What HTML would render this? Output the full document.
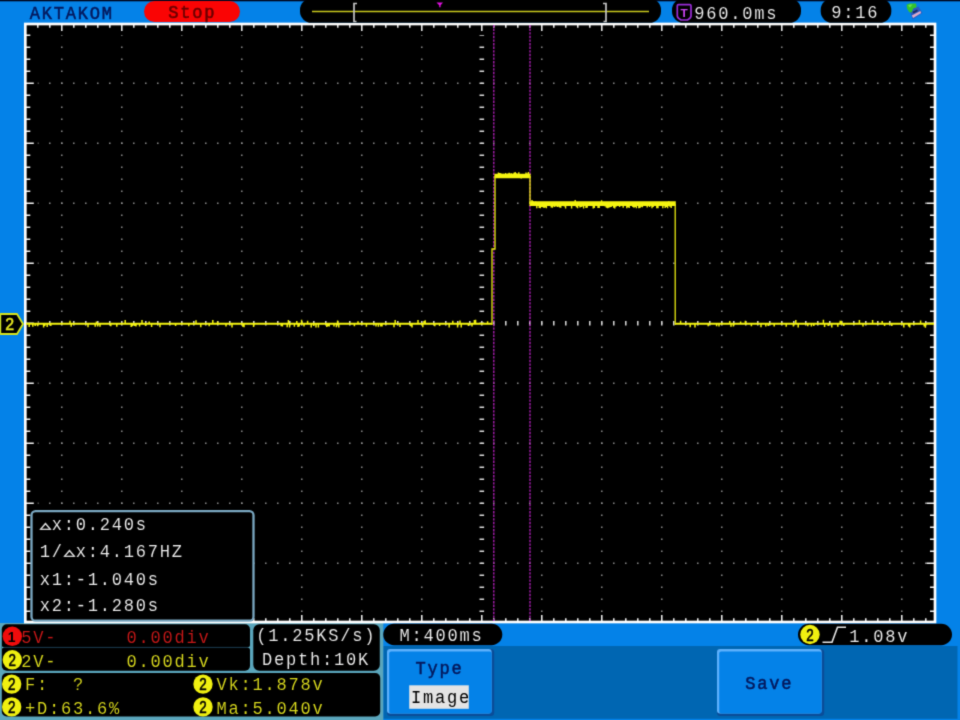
<!DOCTYPE html>
<html lang="en"><head><meta charset="utf-8"><title>AKTAKOM oscilloscope</title>
<style>
html,body{margin:0;padding:0;background:#0482e8;overflow:hidden}
body{width:960px;height:720px;position:relative}
svg{position:absolute;left:0;top:0;display:block}
text{font-family:"Liberation Mono","DejaVu Sans Mono",monospace;font-size:18.0px;letter-spacing:1.832px;white-space:pre;stroke-width:0.1px;stroke:#000}
.w{fill:#eeeeee}.y{fill:#dada1e}.r{fill:#c81818}.n{fill:#04185c;stroke:#04185c;stroke-width:0.5px}.s{fill:#6a0000;stroke:#6a0000;stroke-width:0.55px}.k{fill:#000;stroke:none}
.num{font-family:"Liberation Sans",sans-serif;font-size:16.8px;letter-spacing:0;fill:#000;stroke:#000;stroke-width:0.55px}
.tri{font-family:"DejaVu Sans Mono",monospace;letter-spacing:0}
</style></head><body>
<svg width="960" height="720" viewBox="0 0 960 720">
<defs><filter id="soft" x="-10" y="-10" width="980" height="740" filterUnits="userSpaceOnUse" color-interpolation-filters="sRGB"><feConvolveMatrix order="3" kernelMatrix="0.04 0.2 0.04 0.2 1 0.2 0.04 0.2 0.04" divisor="1.96" edgeMode="duplicate" preserveAlpha="true"/></filter></defs>
<g filter="url(#soft)">
<rect x="-10" y="-10" width="980" height="740" fill="#0482e8"/>
<rect x="-10" y="-10" width="980" height="11.3" fill="#000820"/>
<rect x="383.3" y="646" width="574.2" height="72.8" fill="#0066b2"/>
<rect x="-10" y="623" width="393.3" height="110" fill="#5aa6bc"/>
<rect x="25.3" y="24" width="909.7" height="598" fill="#000"/>
<g stroke="#989898" stroke-width="1.4" fill="none"><line x1="61.8" y1="35.3" x2="61.8" y2="615" stroke-dasharray="1.4 10.6" stroke-dashoffset="0.7"/><line x1="121.8" y1="35.3" x2="121.8" y2="615" stroke-dasharray="1.4 10.6" stroke-dashoffset="0.7"/><line x1="181.8" y1="35.3" x2="181.8" y2="615" stroke-dasharray="1.4 10.6" stroke-dashoffset="0.7"/><line x1="241.8" y1="35.3" x2="241.8" y2="615" stroke-dasharray="1.4 10.6" stroke-dashoffset="0.7"/><line x1="301.8" y1="35.3" x2="301.8" y2="615" stroke-dasharray="1.4 10.6" stroke-dashoffset="0.7"/><line x1="361.8" y1="35.3" x2="361.8" y2="615" stroke-dasharray="1.4 10.6" stroke-dashoffset="0.7"/><line x1="421.8" y1="35.3" x2="421.8" y2="615" stroke-dasharray="1.4 10.6" stroke-dashoffset="0.7"/><line x1="541.8" y1="35.3" x2="541.8" y2="615" stroke-dasharray="1.4 10.6" stroke-dashoffset="0.7"/><line x1="601.8" y1="35.3" x2="601.8" y2="615" stroke-dasharray="1.4 10.6" stroke-dashoffset="0.7"/><line x1="661.8" y1="35.3" x2="661.8" y2="615" stroke-dasharray="1.4 10.6" stroke-dashoffset="0.7"/><line x1="721.8" y1="35.3" x2="721.8" y2="615" stroke-dasharray="1.4 10.6" stroke-dashoffset="0.7"/><line x1="781.8" y1="35.3" x2="781.8" y2="615" stroke-dasharray="1.4 10.6" stroke-dashoffset="0.7"/><line x1="841.8" y1="35.3" x2="841.8" y2="615" stroke-dasharray="1.4 10.6" stroke-dashoffset="0.7"/><line x1="901.8" y1="35.3" x2="901.8" y2="615" stroke-dasharray="1.4 10.6" stroke-dashoffset="0.7"/><line x1="37.8" y1="83.3" x2="930" y2="83.3" stroke-dasharray="1.4 10.6" stroke-dashoffset="0.7"/><line x1="37.8" y1="143.3" x2="930" y2="143.3" stroke-dasharray="1.4 10.6" stroke-dashoffset="0.7"/><line x1="37.8" y1="203.3" x2="930" y2="203.3" stroke-dasharray="1.4 10.6" stroke-dashoffset="0.7"/><line x1="37.8" y1="263.3" x2="930" y2="263.3" stroke-dasharray="1.4 10.6" stroke-dashoffset="0.7"/><line x1="37.8" y1="383.3" x2="930" y2="383.3" stroke-dasharray="1.4 10.6" stroke-dashoffset="0.7"/><line x1="37.8" y1="443.3" x2="930" y2="443.3" stroke-dasharray="1.4 10.6" stroke-dashoffset="0.7"/><line x1="37.8" y1="503.3" x2="930" y2="503.3" stroke-dasharray="1.4 10.6" stroke-dashoffset="0.7"/><line x1="37.8" y1="563.3" x2="930" y2="563.3" stroke-dasharray="1.4 10.6" stroke-dashoffset="0.7"/></g>
<g stroke="#dcdcdc" fill="none">
<line x1="481.8" y1="35.3" x2="481.8" y2="615" stroke-width="4.6" stroke-dasharray="1.5 10.5" stroke-dashoffset="0.75"/>
<line x1="37.8" y1="323.3" x2="930" y2="323.3" stroke-width="4.6" stroke-dasharray="1.5 10.5" stroke-dashoffset="0.75"/>
</g>
<path d="M37.8 24 v3.7 M37.8 622 v-3.7 M49.8 24 v3.7 M49.8 622 v-3.7 M61.8 24 v7 M61.8 622 v-7 M73.8 24 v3.7 M73.8 622 v-3.7 M85.8 24 v3.7 M85.8 622 v-3.7 M97.8 24 v3.7 M97.8 622 v-3.7 M109.8 24 v3.7 M109.8 622 v-3.7 M121.8 24 v7 M121.8 622 v-7 M133.8 24 v3.7 M133.8 622 v-3.7 M145.8 24 v3.7 M145.8 622 v-3.7 M157.8 24 v3.7 M157.8 622 v-3.7 M169.8 24 v3.7 M169.8 622 v-3.7 M181.8 24 v7 M181.8 622 v-7 M193.8 24 v3.7 M193.8 622 v-3.7 M205.8 24 v3.7 M205.8 622 v-3.7 M217.8 24 v3.7 M217.8 622 v-3.7 M229.8 24 v3.7 M229.8 622 v-3.7 M241.8 24 v7 M241.8 622 v-7 M253.8 24 v3.7 M253.8 622 v-3.7 M265.8 24 v3.7 M265.8 622 v-3.7 M277.8 24 v3.7 M277.8 622 v-3.7 M289.8 24 v3.7 M289.8 622 v-3.7 M301.8 24 v7 M301.8 622 v-7 M313.8 24 v3.7 M313.8 622 v-3.7 M325.8 24 v3.7 M325.8 622 v-3.7 M337.8 24 v3.7 M337.8 622 v-3.7 M349.8 24 v3.7 M349.8 622 v-3.7 M361.8 24 v7 M361.8 622 v-7 M373.8 24 v3.7 M373.8 622 v-3.7 M385.8 24 v3.7 M385.8 622 v-3.7 M397.8 24 v3.7 M397.8 622 v-3.7 M409.8 24 v3.7 M409.8 622 v-3.7 M421.8 24 v7 M421.8 622 v-7 M433.8 24 v3.7 M433.8 622 v-3.7 M445.8 24 v3.7 M445.8 622 v-3.7 M457.8 24 v3.7 M457.8 622 v-3.7 M469.8 24 v3.7 M469.8 622 v-3.7 M481.8 24 v7 M481.8 622 v-7 M493.8 24 v3.7 M493.8 622 v-3.7 M505.8 24 v3.7 M505.8 622 v-3.7 M517.8 24 v3.7 M517.8 622 v-3.7 M529.8 24 v3.7 M529.8 622 v-3.7 M541.8 24 v7 M541.8 622 v-7 M553.8 24 v3.7 M553.8 622 v-3.7 M565.8 24 v3.7 M565.8 622 v-3.7 M577.8 24 v3.7 M577.8 622 v-3.7 M589.8 24 v3.7 M589.8 622 v-3.7 M601.8 24 v7 M601.8 622 v-7 M613.8 24 v3.7 M613.8 622 v-3.7 M625.8 24 v3.7 M625.8 622 v-3.7 M637.8 24 v3.7 M637.8 622 v-3.7 M649.8 24 v3.7 M649.8 622 v-3.7 M661.8 24 v7 M661.8 622 v-7 M673.8 24 v3.7 M673.8 622 v-3.7 M685.8 24 v3.7 M685.8 622 v-3.7 M697.8 24 v3.7 M697.8 622 v-3.7 M709.8 24 v3.7 M709.8 622 v-3.7 M721.8 24 v7 M721.8 622 v-7 M733.8 24 v3.7 M733.8 622 v-3.7 M745.8 24 v3.7 M745.8 622 v-3.7 M757.8 24 v3.7 M757.8 622 v-3.7 M769.8 24 v3.7 M769.8 622 v-3.7 M781.8 24 v7 M781.8 622 v-7 M793.8 24 v3.7 M793.8 622 v-3.7 M805.8 24 v3.7 M805.8 622 v-3.7 M817.8 24 v3.7 M817.8 622 v-3.7 M829.8 24 v3.7 M829.8 622 v-3.7 M841.8 24 v7 M841.8 622 v-7 M853.8 24 v3.7 M853.8 622 v-3.7 M865.8 24 v3.7 M865.8 622 v-3.7 M877.8 24 v3.7 M877.8 622 v-3.7 M889.8 24 v3.7 M889.8 622 v-3.7 M901.8 24 v7 M901.8 622 v-7 M913.8 24 v3.7 M913.8 622 v-3.7 M925.8 24 v3.7 M925.8 622 v-3.7 M25.3 35.3 h5 M935 35.3 h-5 M25.3 47.3 h5 M935 47.3 h-5 M25.3 59.3 h5 M935 59.3 h-5 M25.3 71.3 h5 M935 71.3 h-5 M25.3 83.3 h8.5 M935 83.3 h-8.5 M25.3 95.3 h5 M935 95.3 h-5 M25.3 107.3 h5 M935 107.3 h-5 M25.3 119.3 h5 M935 119.3 h-5 M25.3 131.3 h5 M935 131.3 h-5 M25.3 143.3 h8.5 M935 143.3 h-8.5 M25.3 155.3 h5 M935 155.3 h-5 M25.3 167.3 h5 M935 167.3 h-5 M25.3 179.3 h5 M935 179.3 h-5 M25.3 191.3 h5 M935 191.3 h-5 M25.3 203.3 h8.5 M935 203.3 h-8.5 M25.3 215.3 h5 M935 215.3 h-5 M25.3 227.3 h5 M935 227.3 h-5 M25.3 239.3 h5 M935 239.3 h-5 M25.3 251.3 h5 M935 251.3 h-5 M25.3 263.3 h8.5 M935 263.3 h-8.5 M25.3 275.3 h5 M935 275.3 h-5 M25.3 287.3 h5 M935 287.3 h-5 M25.3 299.3 h5 M935 299.3 h-5 M25.3 311.3 h5 M935 311.3 h-5 M25.3 323.3 h8.5 M935 323.3 h-8.5 M25.3 335.3 h5 M935 335.3 h-5 M25.3 347.3 h5 M935 347.3 h-5 M25.3 359.3 h5 M935 359.3 h-5 M25.3 371.3 h5 M935 371.3 h-5 M25.3 383.3 h8.5 M935 383.3 h-8.5 M25.3 395.3 h5 M935 395.3 h-5 M25.3 407.3 h5 M935 407.3 h-5 M25.3 419.3 h5 M935 419.3 h-5 M25.3 431.3 h5 M935 431.3 h-5 M25.3 443.3 h8.5 M935 443.3 h-8.5 M25.3 455.3 h5 M935 455.3 h-5 M25.3 467.3 h5 M935 467.3 h-5 M25.3 479.3 h5 M935 479.3 h-5 M25.3 491.3 h5 M935 491.3 h-5 M25.3 503.3 h8.5 M935 503.3 h-8.5 M25.3 515.3 h5 M935 515.3 h-5 M25.3 527.3 h5 M935 527.3 h-5 M25.3 539.3 h5 M935 539.3 h-5 M25.3 551.3 h5 M935 551.3 h-5 M25.3 563.3 h8.5 M935 563.3 h-8.5 M25.3 575.3 h5 M935 575.3 h-5 M25.3 587.3 h5 M935 587.3 h-5 M25.3 599.3 h5 M935 599.3 h-5 M25.3 611.3 h5 M935 611.3 h-5" stroke="#f4f4f4" stroke-width="1.5" fill="none"/>
<rect x="25.3" y="24" width="909.7" height="598" fill="none" stroke="#fff" stroke-width="2.7"/>
<g stroke="#ac1eb4" stroke-width="1.35" stroke-dasharray="2.4 1.2" fill="none">
<line x1="493.8" y1="25" x2="493.8" y2="621"/><line x1="530" y1="25" x2="530" y2="621"/></g>
<path d="M26 323.7 H492 M675 323.7 H934" stroke="#f4f410" stroke-width="1.9" fill="none"/>
<path d="M29.2 323.7 v3.4 M32.8 323.7 v3.1 M35.2 323.7 v2.4 M37.6 323.7 v2.6 M43.6 323.7 v3.8 M44.8 323.7 v2.4 M47.2 323.7 v3.3 M50.8 323.7 v2.3 M70.0 323.7 v-3.0 M71.2 323.7 v3.1 M88.0 323.7 v3.5 M95.2 323.7 v3.1 M96.4 323.7 v-2.3 M97.6 323.7 v2.7 M100.0 323.7 v3.0 M110.8 323.7 v2.6 M116.8 323.7 v3.0 M125.2 323.7 v-3.8 M131.2 323.7 v3.4 M132.4 323.7 v2.6 M134.8 323.7 v2.2 M136.0 323.7 v2.9 M139.6 323.7 v2.7 M142.0 323.7 v-3.7 M145.6 323.7 v2.4 M149.2 323.7 v-2.3 M151.6 323.7 v3.2 M160.0 323.7 v3.6 M175.6 323.7 v2.3 M188.8 323.7 v2.6 M196.0 323.7 v-3.4 M200.8 323.7 v3.6 M209.2 323.7 v2.5 M212.8 323.7 v-3.7 M217.6 323.7 v-2.3 M226.0 323.7 v2.7 M232.0 323.7 v3.8 M242.8 323.7 v3.0 M244.0 323.7 v3.6 M253.6 323.7 v3.2 M281.2 323.7 v2.5 M282.4 323.7 v2.7 M287.2 323.7 v3.5 M288.4 323.7 v-3.8 M289.6 323.7 v3.9 M294.4 323.7 v3.0 M296.8 323.7 v-2.8 M298.0 323.7 v3.2 M299.2 323.7 v2.8 M301.6 323.7 v-4.0 M304.0 323.7 v2.7 M307.6 323.7 v-3.0 M311.2 323.7 v3.9 M313.6 323.7 v2.3 M316.0 323.7 v3.9 M318.4 323.7 v3.7 M326.8 323.7 v3.2 M328.0 323.7 v2.5 M329.2 323.7 v2.8 M334.0 323.7 v2.9 M336.4 323.7 v3.5 M337.6 323.7 v-3.1 M338.8 323.7 v3.7 M354.4 323.7 v2.5 M358.0 323.7 v-2.4 M366.4 323.7 v3.0 M376.0 323.7 v2.9 M378.4 323.7 v3.1 M380.8 323.7 v2.9 M382.0 323.7 v2.8 M394.0 323.7 v3.5 M395.2 323.7 v-3.7 M400.0 323.7 v3.2 M410.8 323.7 v2.5 M412.0 323.7 v3.7 M418.0 323.7 v-3.6 M422.8 323.7 v3.5 M424.0 323.7 v-2.7 M425.2 323.7 v-3.5 M434.8 323.7 v2.5 M439.6 323.7 v2.3 M449.2 323.7 v3.8 M452.8 323.7 v-3.0 M457.6 323.7 v3.9 M460.0 323.7 v-3.2 M461.2 323.7 v3.7 M468.4 323.7 v2.2 M472.0 323.7 v2.8 M474.4 323.7 v-3.6 M475.6 323.7 v-3.9 M487.6 323.7 v-2.4 M680.6 323.7 v-2.9 M690.2 323.7 v3.5 M695.0 323.7 v3.9 M708.2 323.7 v2.5 M716.6 323.7 v2.6 M719.0 323.7 v2.7 M729.8 323.7 v-2.7 M731.0 323.7 v3.1 M733.4 323.7 v2.7 M740.6 323.7 v-2.3 M745.4 323.7 v-2.9 M751.4 323.7 v2.5 M761.0 323.7 v3.6 M765.8 323.7 v2.7 M768.2 323.7 v2.4 M774.2 323.7 v2.8 M786.2 323.7 v3.1 M793.4 323.7 v2.8 M795.8 323.7 v-3.6 M798.2 323.7 v3.9 M807.8 323.7 v2.6 M811.4 323.7 v2.9 M813.8 323.7 v2.3 M823.4 323.7 v-3.9 M824.6 323.7 v3.4 M828.2 323.7 v2.2 M831.8 323.7 v3.9 M837.8 323.7 v3.1 M840.2 323.7 v-2.9 M841.4 323.7 v-3.0 M843.8 323.7 v2.3 M859.4 323.7 v-3.6 M863.0 323.7 v2.7 M872.6 323.7 v-3.7 M882.2 323.7 v-2.6 M884.6 323.7 v2.3 M891.8 323.7 v2.4 M903.8 323.7 v3.7 M908.6 323.7 v2.7 M909.8 323.7 v3.8 M920.6 323.7 v-3.1 M924.2 323.7 v2.8 M925.4 323.7 v4.0" stroke="#f4f410" stroke-width="1.5" fill="none"/>
<path d="M494.4 176 H530.6" stroke="#f4f410" stroke-width="4.4" fill="none"/><path d="M529.4 203.7 H675.8" stroke="#f4f410" stroke-width="4.8" fill="none"/>
<path d="M498.4 176.0 v-3.4 M499.6 176.0 v-3.0 M500.8 176.0 v-2.8 M503.2 176.0 v-2.3 M505.6 176.0 v-2.9 M508.0 176.0 v-2.4 M509.2 176.0 v-3.3 M510.4 176.0 v-2.6 M511.6 176.0 v-2.8 M514.0 176.0 v-3.3 M515.2 176.0 v-3.9 M516.4 176.0 v-2.7 M517.6 176.0 v-2.3 M518.8 176.0 v-3.8 M521.2 176.0 v2.6 M526.0 176.0 v-3.4 M527.2 176.0 v-2.6 M528.4 176.0 v-4.0 M532.0 204.0 v-4.1 M533.2 204.0 v-2.8 M535.6 204.0 v-2.6 M536.8 204.0 v4.3 M539.2 204.0 v4.1 M540.4 204.0 v4.2 M541.6 204.0 v3.0 M542.8 204.0 v3.3 M544.0 204.0 v4.0 M545.2 204.0 v3.6 M546.4 204.0 v4.2 M551.2 204.0 v3.4 M552.4 204.0 v3.8 M553.6 204.0 v2.6 M554.8 204.0 v3.0 M557.2 204.0 v2.9 M558.4 204.0 v2.8 M559.6 204.0 v3.4 M560.8 204.0 v3.8 M564.4 204.0 v2.6 M565.6 204.0 v4.4 M571.6 204.0 v4.5 M575.2 204.0 v-4.1 M576.4 204.0 v3.2 M577.6 204.0 v4.3 M580.0 204.0 v3.5 M581.2 204.0 v3.0 M582.4 204.0 v2.6 M583.6 204.0 v4.4 M586.0 204.0 v4.1 M587.2 204.0 v3.8 M593.2 204.0 v4.5 M594.4 204.0 v4.1 M598.0 204.0 v4.0 M599.2 204.0 v4.0 M601.6 204.0 v-3.8 M605.2 204.0 v2.5 M606.4 204.0 v3.7 M607.6 204.0 v4.3 M608.8 204.0 v3.8 M610.0 204.0 v3.2 M611.2 204.0 v3.0 M613.6 204.0 v3.8 M614.8 204.0 v4.4 M616.0 204.0 v2.7 M619.6 204.0 v3.0 M623.2 204.0 v3.8 M626.8 204.0 v4.3 M628.0 204.0 v3.3 M629.2 204.0 v4.1 M632.8 204.0 v2.9 M634.0 204.0 v3.8 M635.2 204.0 v3.1 M636.4 204.0 v4.3 M638.8 204.0 v4.2 M640.0 204.0 v4.0 M641.2 204.0 v2.7 M642.4 204.0 v3.2 M647.2 204.0 v3.6 M649.6 204.0 v3.0 M652.0 204.0 v4.3 M653.2 204.0 v3.0 M656.8 204.0 v4.3 M658.0 204.0 v4.3 M662.8 204.0 v4.2 M665.2 204.0 v4.0 M666.4 204.0 v2.9 M667.6 204.0 v4.3 M668.8 204.0 v-2.7 M670.0 204.0 v2.8 M671.2 204.0 v3.9" stroke="#f4f410" stroke-width="1.4" fill="none"/>
<path d="M492 325 V249 H495 V176 M530 176 V204 M675.2 204 V325" stroke="#e4e410" stroke-width="1.35" fill="none"/>
<path d="M0.3 314 H17 L23 324 L17 334 H0.3 Z" fill="#000" stroke="#d8e41c" stroke-width="1.8" stroke-linejoin="round"/>
<text class="num" text-anchor="middle" style="fill:#e6e620;stroke:#e6e620;stroke-width:0.5px;font-size:16.8px" transform="translate(9.7 330) scale(0.95 1)">2</text>
<text class="n" transform="translate(29.87 18.70) scale(0.95 1)">AKTAKOM</text>
<rect x="144" y="1" width="96" height="21" rx="10.5" fill="#fa0404"/>
<text class="s" transform="translate(168.17 18.20) scale(0.95 1)">Stop</text>
<rect x="300" y="-1.5" width="361" height="24.3" rx="11.5" fill="#000"/>
<line x1="312" y1="11.5" x2="649" y2="11.5" stroke="#c8c81c" stroke-width="1.3"/>
<path d="M357 3.5 H354 V21.5 H356.5 M603 3.5 H606 V21.5 H603.5" stroke="#c4c4c4" stroke-width="1.7" fill="none"/>
<path d="M436.5 2.6 H443 L440.6 5.2 V7.2 H439.2 V5.2 Z" fill="#e010e0"/>
<rect x="672" y="-1.5" width="129" height="24.3" rx="11.5" fill="#000"/>
<path d="M678.6 4.6 H689.8 Q691 4.6 691 5.8 V16 Q691 18 687.5 20 H681 Q677.3 18 677.3 16 V5.8 Q677.3 4.6 678.6 4.6 Z" fill="#000" stroke="#9a2cd8" stroke-width="1.7"/>
<text x="684.1" y="16.6" text-anchor="middle" style="font-family:'Liberation Sans',sans-serif;font-weight:bold;font-size:11.8px;letter-spacing:0;fill:#cc44f4;stroke:none">T</text>
<text class="w" transform="translate(694.37 19.10) scale(0.95 1)">960.0ms</text>
<rect x="820.7" y="-1.5" width="70.59999999999991" height="24.3" rx="11.5" fill="#000"/>
<text class="w" transform="translate(831.27 18.00) scale(0.95 1)">9:16</text>
<path d="M909.3 9.5 L918.5 6.5 L922.3 13 L912.8 19.5 Z" fill="#2a58c0"/>
<path d="M911.8 15.4 L920.3 11 L921.2 13 L913.1 17.9 Z" fill="#dcacc8"/>
<path d="M912.5 11.8 L917 9.4 L918 11 L913.5 13.5 Z" fill="#1c2c60"/>
<path d="M906.6 4.7 L909.3 3.4 L916 3.6 L916.6 7.3 L913.3 8.6 L911.6 12.6 L909.3 12.3 L907 8.6 Z" fill="#34c42c"/>
<path d="M908 5.5 L910 4.4 L912.5 4.6 L910 7.5 Z" fill="#6ce050"/>
<rect x="31.5" y="511.2" width="222" height="109.5" rx="4" fill="#000" stroke="#7aa8c2" stroke-width="2.3"/>
<text class="w tri" style="stroke:#e6e6e6;stroke-width:0.5px" transform="translate(39.70 528.70) scale(1.06 0.63)">△</text>
<text class="w" transform="translate(51.87 530.00) scale(0.95 1)">x:0.240s</text>
<text class="w" transform="translate(39.87 556.80) scale(0.95 1)">1/</text>
<text class="w tri" style="stroke:#e6e6e6;stroke-width:0.5px" transform="translate(63.70 555.50) scale(1.06 0.63)">△</text>
<text class="w" transform="translate(75.87 556.80) scale(0.95 1)">x:4.167HZ</text>
<text class="w" transform="translate(39.87 584.80) scale(0.95 1)">x1:-1.040s</text>
<text class="w" transform="translate(39.87 611.10) scale(0.95 1)">x2:-1.280s</text>
<rect x="1.8" y="624.2" width="248.2" height="46.5" rx="5" fill="#000"/>
<rect x="1.8" y="646.9" width="248.2" height="1" fill="#1a3c50"/>
<path d="M1.8 645 Q1.8 647.4 4.5 647.4 Q1.8 647.4 1.8 650 Z M250 645 Q250 647.4 247.3 647.4 Q250 647.4 250 650 Z" fill="#5aa6bc"/>
<rect x="253.3" y="624.2" width="126.5" height="46.5" rx="6" fill="#000"/>
<rect x="1.8" y="673" width="378.4" height="43.5" rx="5" fill="#000"/>
<circle cx="12.3" cy="636.3" r="9.7" fill="#f00c0c"/>
<text class="num" text-anchor="middle" style="font-weight:bold;font-size:15.5px;stroke:none" transform="translate(11.5 641.6999999999999) scale(0.9 1)">1</text>
<text class="r" transform="translate(21.17 642.80) scale(0.95 1)">5V-</text>
<text class="r" transform="translate(126.57 642.80) scale(0.95 1)">0.00div</text>
<circle cx="12.3" cy="659.8" r="9.7" fill="#f0f010"/>
<text class="num" text-anchor="middle" transform="translate(12.3 665.8) scale(0.8 1)">2</text>
<text class="y" transform="translate(21.17 667.00) scale(0.95 1)">2V-</text>
<text class="y" transform="translate(126.57 667.00) scale(0.95 1)">0.00div</text>
<text class="w" transform="translate(256.27 640.80) scale(0.95 1)">(1.25KS/s)</text>
<text class="w" transform="translate(262.07 664.80) scale(0.95 1)">Depth:10K</text>
<circle cx="11.7" cy="684.1" r="9.7" fill="#f0f010"/>
<text class="num" text-anchor="middle" transform="translate(11.7 690.1) scale(0.8 1)">2</text>
<text class="y" transform="translate(25.07 690.40) scale(0.95 1)">F:  ?</text>
<circle cx="11.7" cy="706.9" r="9.7" fill="#f0f010"/>
<text class="num" text-anchor="middle" transform="translate(11.7 712.9) scale(0.8 1)">2</text>
<text class="y" transform="translate(25.07 713.70) scale(0.95 1)">+D:63.6%</text>
<circle cx="203" cy="684.1" r="9.7" fill="#f0f010"/>
<text class="num" text-anchor="middle" transform="translate(203 690.1) scale(0.8 1)">2</text>
<text class="y" transform="translate(216.57 690.40) scale(0.95 1)">Vk:1.878v</text>
<circle cx="203" cy="706.9" r="9.7" fill="#f0f010"/>
<text class="num" text-anchor="middle" transform="translate(203 712.9) scale(0.8 1)">2</text>
<text class="y" transform="translate(216.57 713.70) scale(0.95 1)">Ma:5.040v</text>
<rect x="383.3" y="623.8" width="119" height="21.4" rx="10.7" fill="#000"/>
<text class="w" transform="translate(399.57 641.00) scale(0.95 1)">M:400ms</text>
<rect x="798" y="623.8" width="154" height="21.4" rx="10.7" fill="#000"/>
<circle cx="810" cy="634.5" r="9.7" fill="#f0f010"/>
<text class="num" text-anchor="middle" transform="translate(810 640.5) scale(0.8 1)">2</text>
<path d="M822.5 642.3 H832 L837.5 627.2 H846" stroke="#e6e6e6" stroke-width="1.6" fill="none"/>
<text class="w" transform="translate(849.17 641.80) scale(0.95 1)">1.08v</text>
<rect x="387" y="649" width="107.19999999999999" height="67" rx="3.5" fill="#0a4c98"/>
<rect x="387" y="649" width="104.6" height="64.4" rx="3" fill="#5cb0fc"/>
<rect x="389.2" y="651.6" width="102.39999999999999" height="61.8" rx="2" fill="#0482e8"/>
<rect x="717" y="649" width="107.20000000000005" height="67" rx="3.5" fill="#0a4c98"/>
<rect x="717" y="649" width="104.60000000000005" height="64.4" rx="3" fill="#5cb0fc"/>
<rect x="719.2" y="651.6" width="102.40000000000005" height="61.8" rx="2" fill="#0482e8"/>
<text class="n" transform="translate(415.57 674.30) scale(0.95 1)">Type</text>
<rect x="409.2" y="685.3" width="59.6" height="23.5" fill="#e4e4e4"/>
<text class="k" transform="translate(410.97 702.80) scale(0.95 1)">Image</text>
<text class="n" transform="translate(745.17 689.00) scale(0.95 1)">Save</text>
</g></svg></body></html>
